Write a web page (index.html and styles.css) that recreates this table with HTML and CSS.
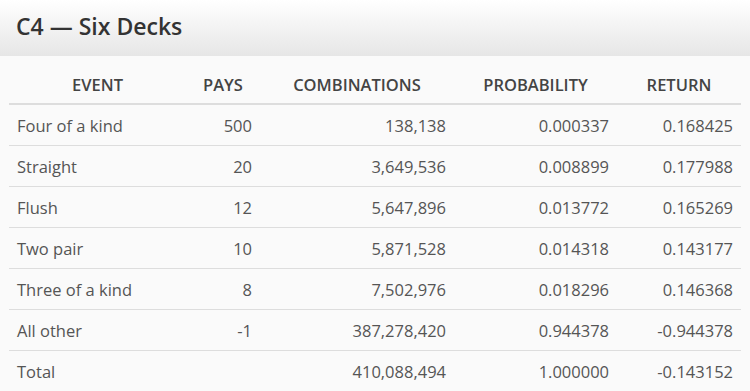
FILE: index.html
```html
<!DOCTYPE html>
<html>
<head>
<meta charset="utf-8">
<link rel="stylesheet" href="styles.css">
</head>
<body>
<div class="panel">
  <div class="panel-heading"><h2 class="title">C4 — Six Decks</h2></div>
  <div class="panel-body">
    <table class="pay-table">
      <colgroup>
        <col class="c-event"><col class="c-pays"><col class="c-comb"><col class="c-prob"><col class="c-ret">
      </colgroup>
      <thead>
        <tr><th>EVENT</th><th>PAYS</th><th>COMBINATIONS</th><th>PROBABILITY</th><th>RETURN</th></tr>
      </thead>
      <tbody>
        <tr><td class="left">Four of a kind</td><td>500</td><td>138,138</td><td>0.000337</td><td>0.168425</td></tr>
        <tr><td class="left">Straight</td><td>20</td><td>3,649,536</td><td>0.008899</td><td>0.177988</td></tr>
        <tr><td class="left">Flush</td><td>12</td><td>5,647,896</td><td>0.013772</td><td>0.165269</td></tr>
        <tr><td class="left">Two pair</td><td>10</td><td>5,871,528</td><td>0.014318</td><td>0.143177</td></tr>
        <tr><td class="left">Three of a kind</td><td>8</td><td>7,502,976</td><td>0.018296</td><td>0.146368</td></tr>
        <tr><td class="left">All other</td><td>-1</td><td>387,278,420</td><td>0.944378</td><td>-0.944378</td></tr>
        <tr><td class="left">Total</td><td></td><td>410,088,494</td><td>1.000000</td><td>-0.143152</td></tr>
      </tbody>
    </table>
  </div>
</div>
</body>
</html>
```
FILE: styles.css
```css
html, body {
  margin: 0;
  padding: 0;
  background: #fafafa;
  font-family: "Open Sans", "Liberation Sans", sans-serif;
  color: #555;
}
.panel-heading {
  height: 56px;
  box-sizing: border-box;
  padding: 0 16px;
  display: flex;
  align-items: center;
  background: linear-gradient(to bottom, #ffffff 0%, #e6e6e6 100%);
}
.title {
  margin: 0;
  font-size: 23px;
  font-weight: 600;
  color: #333;
  padding-bottom: 4px;
}
.panel-body {
  padding: 9px 9px 0 9px;
}
.pay-table {
  width: 732px;
  table-layout: fixed;
  border-collapse: collapse;
  font-size: 16.5px;
}
.c-event { width: 177px; }
.c-pays { width: 74px; }
.c-comb { width: 194px; }
.c-prob { width: 163px; }
.c-ret { width: 124px; }
.pay-table th {
  height: 39px;
  padding: 0 8px;
  font-size: 16.5px;
  font-weight: 600;
  color: #444;
  text-align: center;
  vertical-align: middle;
  border-bottom: 2px solid #dddddd;
  box-sizing: border-box;
}
.pay-table td {
  height: 40px;
  padding: 0 8px;
  text-align: right;
  vertical-align: middle;
  border-bottom: 1px solid #dddddd;
}
.pay-table tbody tr:last-child td {
  border-bottom: none;
}
.pay-table td.left {
  text-align: left;
}
```
